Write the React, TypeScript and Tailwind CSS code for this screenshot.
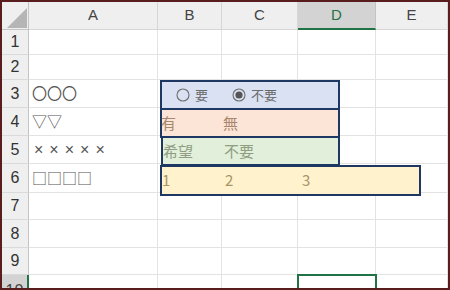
const cols = ["A", "B", "C", "D", "E"]
const rowHeights = [25, 25, 28, 28, 28, 29, 27, 28, 27, 28]

const colA: Record<number, string> = {
  3: "〇〇〇",
  4: "▽▽",
  6: "□□□□",
}

const jp = "font-['Noto_Sans_CJK_JP','Noto_Sans',sans-serif]"

function Radio({ checked }: { checked?: boolean }) {
  return (
    <svg width="14" height="14" viewBox="0 0 14 14">
      <circle cx="7" cy="7" r="6" fill="none" stroke="#6e6e6e" strokeWidth="1.1" />
      {checked && <circle cx="7" cy="7" r="3.6" fill="#555" />}
    </svg>
  )
}

export default function App() {
  return (
    <div className="relative w-[450px] h-[290px] overflow-hidden border-2 border-[#5a1d1d] bg-white">
      <div className="grid grid-cols-[27px_129px_64px_76px_78px_72px] font-['Liberation_Sans',sans-serif]">
        {/* header row */}
        <div className="h-[28px] bg-[#efefef] border-r border-b border-[#c4c4c4] relative">
          <svg className="absolute left-[5px] top-[6px]" width="21" height="21" viewBox="0 0 21 21">
            <polygon points="0,20 20,20 20,0" fill="#b5b5b5" />
          </svg>
        </div>
        {cols.map((c) => (
          <div
            key={c}
            className={
              c === "D"
                ? "h-[28px] flex items-center justify-center bg-[#d3d3d3] text-[#217346] text-[15px] border-r border-[#c4c4c4] border-b-2 border-b-[#217346]"
                : "h-[28px] flex items-center justify-center bg-[#efefef] text-[#444] text-[15px] border-r border-b border-[#d6d6d6]"
            }
          >
            {c}
          </div>
        ))}

        {rowHeights.map((h, i) => {
          const n = i + 1
          return [
            <div
              key={"r" + n}
              style={{ height: h }}
              className={
                n === 10
                  ? "flex items-start pt-[4px] justify-center bg-[#d3d3d3] text-[#444] text-[16px] border-r-2 border-[#217346]"
                  : "flex items-center justify-center bg-[#efefef] text-[#333] text-[16px] border-r border-[#c4c4c4] border-b border-b-[#dadada]"
              }
            >
              {n}
            </div>,
            ...cols.map((c) => (
              <div
                key={c + n}
                style={{ height: h }}
                className={`flex items-center border-r border-b border-[#e3e3e3] ${jp}`}
              >
                {c === "A" && colA[n] && (
                  <span className="pl-[3px] text-[15px] text-[#555]">{colA[n]}</span>
                )}
                {c === "A" && n === 5 && (
                  <span className="pl-[5px] flex gap-[6px] text-[16px] text-[#555] font-['Liberation_Sans',sans-serif]">
                    <span>×</span>
                    <span>×</span>
                    <span>×</span>
                    <span>×</span>
                    <span>×</span>
                  </span>
                )}
              </div>
            )),
          ]
        })}
      </div>

      {/* option buttons group */}
      <div className={`absolute left-[158px] top-[78px] w-[180px] h-[30px] border-2 border-[#1f3763] bg-[#d9e1f2] flex items-center text-[13px] text-[#6a6a6a] ${jp}`}>
        <span className="ml-[14px] flex items-center gap-[5px]">
          <Radio />
          要
        </span>
        <span className="ml-[24px] flex items-center gap-[5px]">
          <Radio checked />
          不要
        </span>
      </div>

      {/* peach */}
      <div className={`absolute left-[158px] top-[106px] w-[180px] h-[30px] border-2 border-[#1f3763] bg-[#fce4d6] flex items-center text-[15px] text-[#a8876f] ${jp}`}>
        <span className="w-[62px] -ml-[1px]">有</span>
        <span>無</span>
      </div>

      {/* green */}
      <div className={`absolute left-[159px] top-[134px] w-[179px] h-[30px] border-2 border-[#1f3763] bg-[#e2efda] flex items-center text-[15px] text-[#8f9d82] ${jp}`}>
        <span className="w-[61px]">希望</span>
        <span>不要</span>
      </div>

      {/* yellow */}
      <div className={`absolute left-[158px] top-[163px] w-[261px] h-[31px] border-2 border-[#1f3763] bg-[#fff2cc] flex items-center text-[15px] text-[#a99668] ${jp}`}>
        <span className="w-[63px]">1</span>
        <span className="w-[77px]">2</span>
        <span>3</span>
      </div>

      {/* selected cell D10 */}
      <div className="absolute left-[295px] top-[272px] w-[80px] h-[24px] border-2 border-[#217346]" />
    </div>
  )
}
